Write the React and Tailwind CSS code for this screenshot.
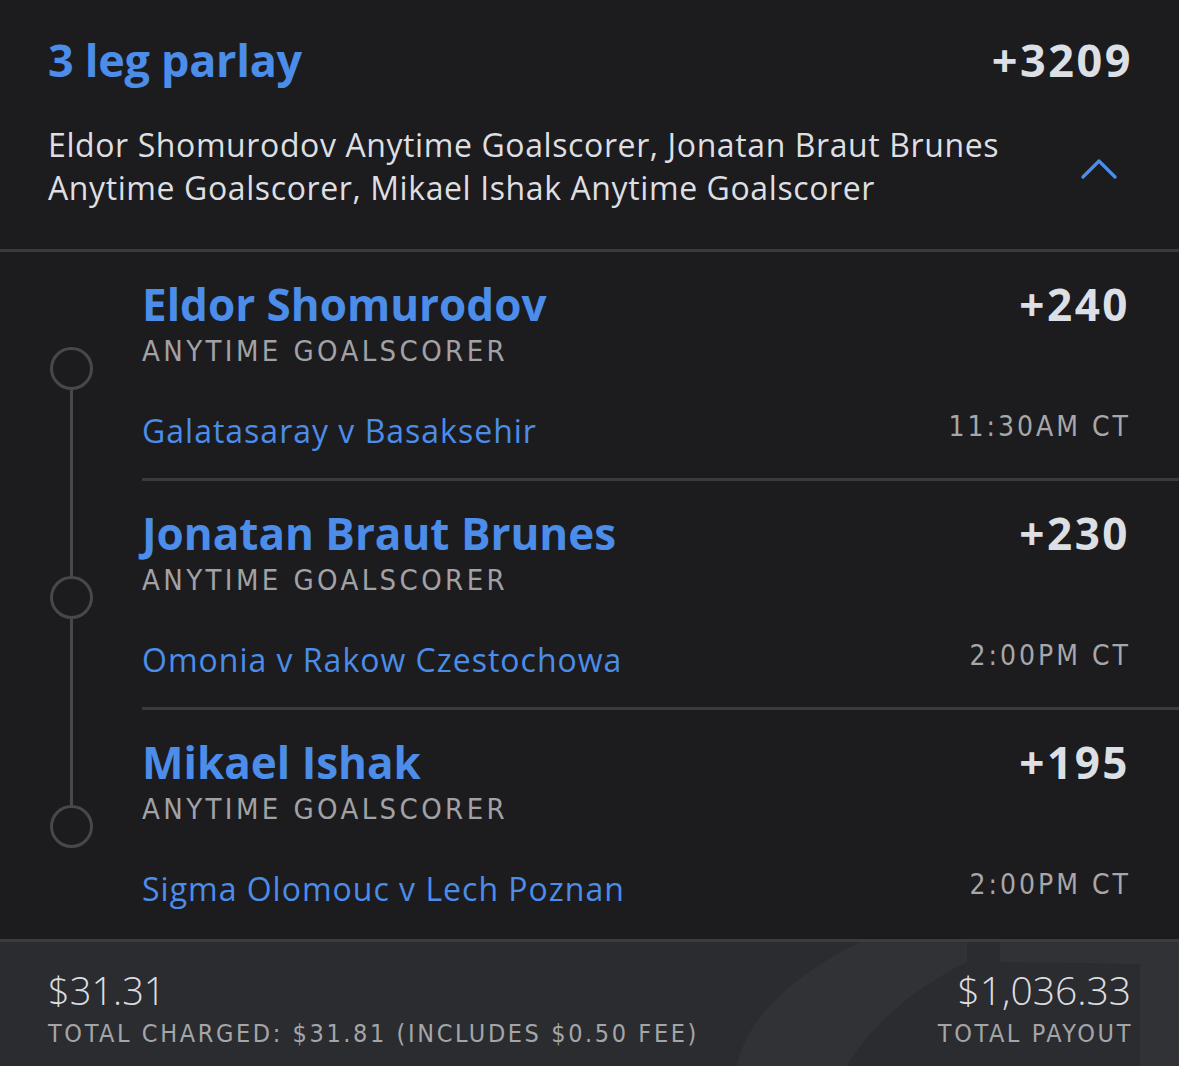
import React from 'react';

const LEGS = [
  { name: 'Eldor Shomurodov', odds: '+240', game: 'Galatasaray v Basaksehir', time: '11:30AM CT', top: false },
  { name: 'Jonatan Braut Brunes', odds: '+230', game: 'Omonia v Rakow Czestochowa', time: '2:00PM CT', top: true },
  { name: 'Mikael Ishak', odds: '+195', game: 'Sigma Olomouc v Lech Poznan', time: '2:00PM CT', top: true, last: true },
];

const sans = { fontFamily: '"Open Sans", "Noto Sans", sans-serif' };
const narrow = { fontFamily: '"DejaVu Sans Condensed", "Liberation Sans Narrow", Roboto, sans-serif' };

function Leg({ leg }) {
  return (
    <div className="flex h-[229px]">
      {/* timeline */}
      <div className="w-[142px] flex flex-col items-center shrink-0">
        <div className={'h-[95px] w-[3px] ' + (leg.top ? 'bg-[#48484b]' : 'bg-transparent')} />
        <div className="h-[43px] w-[43px] rounded-full border-[3px] border-[#48484b] shrink-0" />
        <div className={'flex-1 w-[3px] ' + (leg.last ? 'bg-transparent' : 'bg-[#48484b]')} />
      </div>
      <div className={'flex-1 pr-[51px] pt-[27px] ' + (leg.last ? '' : 'border-b-[3px] border-[#3a3a3d]')}>
        <div className="flex justify-between items-start">
          <div>
            <div className="text-[44px] leading-[50px] font-bold text-[#4b8de9]">{leg.name}</div>
            <div className="text-[29px] leading-[36px] text-[#a2a2a6] tracking-[3.4px] mt-[4px]" style={narrow}>ANYTIME GOALSCORER</div>
          </div>
          <div className="text-[44px] leading-[50px] font-bold text-[#dcdfe4] tracking-[2.5px] -mr-[2px]">{leg.odds}</div>
        </div>
        <div className="flex justify-between items-end mt-[40px]">
          <div className="text-[32px] leading-[40px] text-[#4b8de9] tracking-[1px]">{leg.game}</div>
          <div className="text-[28px] leading-[36px] text-[#a7a7ab] tracking-[3px] mb-[6px] -mr-[3px]" style={narrow}>{leg.time}</div>
        </div>
      </div>
    </div>
  );
}

export default function App() {
  return (
    <div className="w-[1179px] h-[1066px] bg-[#1c1c1e] flex flex-col overflow-hidden" style={sans}>
      <div className="px-[48px] pt-[32px] pb-[40px] border-b-[3px] border-[#3a3a3d]">
        <div className="flex justify-between items-center">
          <div className="text-[45px] leading-[56px] font-bold text-[#4b8de9] tracking-[-0.3px]">3 leg parlay</div>
          <div className="text-[45px] leading-[56px] font-bold text-[#dcdfe4] tracking-[2.5px] -mr-[2px]">+3209</div>
        </div>
        <div className="flex justify-between items-center mt-[35px]">
          <div className="text-[32px] leading-[43px] text-[#dedfe2] tracking-[0.6px] w-[1000px]">
            Eldor Shomurodov Anytime Goalscorer, Jonatan Braut Brunes Anytime Goalscorer, Mikael Ishak Anytime Goalscorer
          </div>
          <svg width="36" height="22" viewBox="0 0 36 22" className="mr-[14px] mt-[4px]">
            <path d="M2 20 L18 4 L34 20" fill="none" stroke="#4b8de9" strokeWidth="3.2" strokeLinecap="round" strokeLinejoin="round" />
          </svg>
        </div>
      </div>

      <div className="flex flex-col">
        {LEGS.map((leg) => (
          <Leg key={leg.name} leg={leg} />
        ))}
      </div>

      <div className="relative flex-1 bg-[#2b2c2f] border-t-[3px] border-[#3c3c3f] overflow-hidden">
        {/* faint logo watermark */}
        <svg className="absolute left-0 top-0" width="1179" height="130" viewBox="0 0 1179 130">
          <path d="M860 0 L967 0 L967 20 C 915 45 868 85 843 130 L 736 130 C 742 80 790 35 860 0 Z" fill="#313235" />
          <path d="M1000 0 L1179 0 L1179 130 L1140 130 L1140 22 L1000 20 Z" fill="#313235" />
        </svg>
        <div className="relative flex justify-between items-start px-[48px] pt-[26px]">
          <div>
            <div className="text-[38px] leading-[44px] text-[#dcdde1] font-light">$31.31</div>
            <div className="text-[25px] leading-[32px] text-[#a4a5a9] tracking-[2.6px] mt-[6px]" style={narrow}>TOTAL CHARGED: $31.81 (INCLUDES $0.50 FEE)</div>
          </div>
          <div className="text-right">
            <div className="text-[39px] leading-[44px] text-[#dcdde1] font-light">$1,036.33</div>
            <div className="text-[25px] leading-[32px] text-[#a4a5a9] tracking-[2.6px] mt-[6px] -mr-[2px]" style={narrow}>TOTAL PAYOUT</div>
          </div>
        </div>
      </div>
    </div>
  );
}
